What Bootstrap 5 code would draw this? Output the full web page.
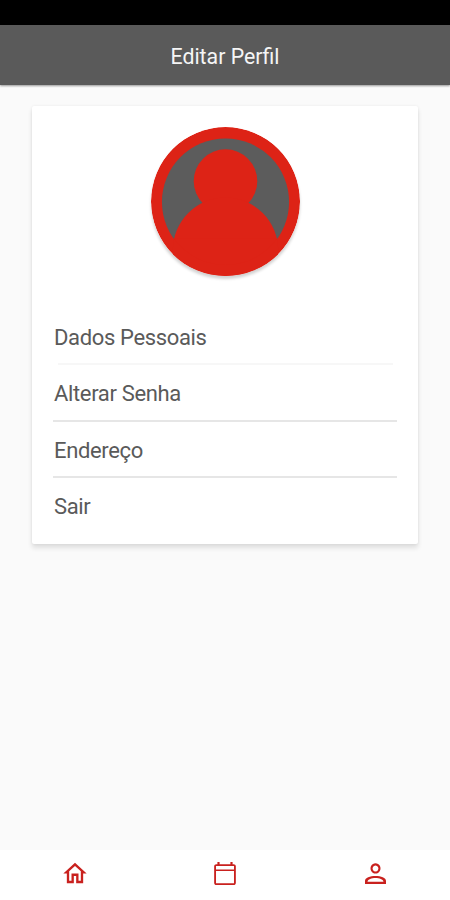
<!DOCTYPE html>
<html lang="pt-BR">
<head>
<meta charset="utf-8">
<meta name="viewport" content="width=device-width, initial-scale=1">
<title>Editar Perfil</title>
<link href="https://cdn.jsdelivr.net/npm/bootstrap@5.3.0/dist/css/bootstrap.min.css" rel="stylesheet">
<style>
body { font-family: Roboto, "Noto Sans", sans-serif; background: #fafafa; }
.status-strip { height: 25px; background: #000; }
.app-bar { height: 60px; padding: 4px 0 0; background: #5a5a5a; box-shadow: 0 1px 2px rgba(0,0,0,.4); }
.app-title { font-size: 21.3px; line-height: 26px; color: #f5f5f5; }
.profile-card { margin: 21px 32px 0; height: 438px; border-radius: 2px; padding: 21px 21px 0; box-shadow: 0 4px 5px rgba(0,0,0,.11), 0 0 3px rgba(0,0,0,.07); }
.avatar { width: 149px; height: 149px; box-shadow: 0 3px 3px rgba(0,0,0,.18); }
.menu-list { margin-top: 33px; }
.menu-row { height: 56.3px; padding: 3px 0 0 1px; font-size: 22px; letter-spacing: -.35px; color: #5a5a5a; border-bottom: 2px solid #e6e6e6; }
.menu-row:first-child { border-color: transparent; border-image: linear-gradient(90deg, transparent 7px, #f7f7f7 7px, #f7f7f7 calc(100% - 6px), transparent calc(100% - 6px)) 2; }
.menu-row:last-child { border-color: transparent; }
.bottom-bar { height: 50px; padding-bottom: 3px; }
.bottom-bar svg { fill: #c9211e; }
</style>
<script src="https://cdn.jsdelivr.net/npm/bootstrap@5.3.0/dist/js/bootstrap.bundle.min.js"></script>
</head>
<body class="vh-100 d-flex flex-column overflow-hidden">
<div class="status-strip flex-shrink-0"></div>
<header class="app-bar navbar justify-content-center flex-shrink-0">
  <h1 class="app-title fw-normal m-0">Editar Perfil</h1>
</header>
<main class="flex-grow-1">
  <section class="profile-card card border-0 bg-white">
    <svg class="avatar rounded-circle d-block mx-auto flex-shrink-0" viewBox="0 0 150 150" aria-hidden="true">
      <defs><clipPath id="disc"><circle cx="75" cy="75.5" r="63.5"/></clipPath></defs>
      <circle cx="75" cy="75" r="75" fill="#dd2316"/>
      <circle cx="75" cy="75.500" r="64" fill="#5c5c5c"/>
      <g fill="#dd2316"><circle cx="75" cy="54.500" r="32"/><circle cx="75" cy="124" r="53"/>
      <path d="M0 112H150V150H0Z" clip-path="url(#disc)"/></g>
    </svg>
    <nav class="menu-list d-flex flex-column">
      <a class="menu-row d-flex align-items-center text-decoration-none" href="#">Dados Pessoais</a>
      <a class="menu-row d-flex align-items-center text-decoration-none" href="#">Alterar Senha</a>
      <a class="menu-row d-flex align-items-center text-decoration-none" href="#">Endereço</a>
      <a class="menu-row d-flex align-items-center text-decoration-none" href="#">Sair</a>
    </nav>
  </section>
</main>
<nav class="bottom-bar bg-white row g-0 align-items-center text-center flex-shrink-0">
  <a class="col d-flex justify-content-center" href="#" aria-label="Início"><svg width="28" height="29" viewBox="0 0 24 24" preserveAspectRatio="none"><path d="M12 5.690l5 4.500V18h-2v-6H9v6H7v-7.810l5-4.500M12 3L2 12h3v8h6v-6h2v6h6v-8h3L12 3z"/></svg></a>
  <a class="col d-flex justify-content-center" href="#" aria-label="Agenda"><svg width="26" height="25" viewBox="0 0 24 24" preserveAspectRatio="none"><path d="M20 3h-1V1h-2v2H7V1H5v2H4c-1.100 0-2 .9-2 2v16c0 1.100.9 2 2 2h16c1.100 0 2-.9 2-2V5c0-1.100-.9-2-2-2zM20.300 21.300H3.700V9.700h16.600v11.600zM20.300 8.200H3.700V4.700h16.600v3.500z"/></svg></a>
  <a class="col d-flex justify-content-center" href="#" aria-label="Perfil"><svg width="21" height="21" viewBox="0 0 21 21"><path fill-rule="evenodd" d="M10.500.2a5 5.200 0 1 0 .01 0zM10.500 2.400a2.900 3 0 1 1-.01 0zM0 21V18C0 14.800 5 13 10.500 13S21 14.800 21 18V21zM2.500 18.800H18.500C18 16.300 14.500 15.100 10.500 15.100S3 16.300 2.500 18.800z"/></svg></a>
</nav>
</body>
</html>
